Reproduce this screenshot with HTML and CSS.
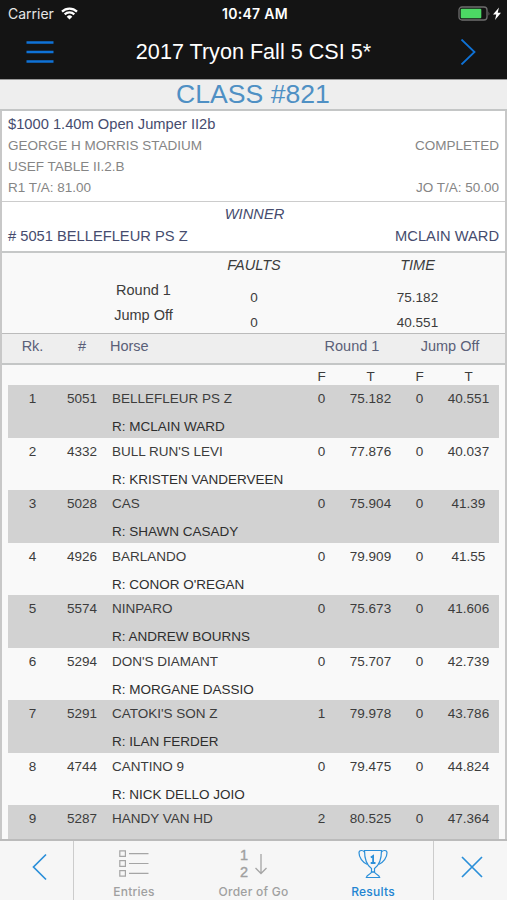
FILE: index.html
```
<!DOCTYPE html>
<html lang="en">
<head>
    <meta charset="UTF-8">
    <meta name="viewport" content="width=device-width, initial-scale=1.0">
    <title>2017 Tryon Fall 5 CSI 5* | Results</title>
    <link rel="stylesheet" href="styles.css">
</head>
<body>

<!-- Status bar -->
<div class="status">
    <div class="carrier">
        <span>Carrier</span>
        <svg width="17" height="13" viewBox="0 0 17 13" fill="none" stroke="#fff" stroke-width="2.2">
            <path d="M1 4.6a10.7 10.7 0 0 1 15 0M3.7 7.4a6.8 6.8 0 0 1 9.6 0"/>
            <path d="M8.5 12.6L5.7 9.7a4 4 0 0 1 5.6 0z" fill="#fff" stroke="none"/>
        </svg>
    </div>
    <div class="clock">10:47 AM</div>
    <div class="battery">
        <svg width="44" height="16" viewBox="0 0 44 16">
            <rect x="1" y="1" width="28" height="13" rx="3" fill="none" stroke="#6d6d6d" stroke-width="1.3"/>
            <rect x="2.7" y="2.8" width="20.6" height="9.4" rx="1" fill="#4cd964"/>
            <path d="M30.5 5.2q1.8 2.3 0 4.600z" fill="#6d6d6d"/>
            <path d="M41 1.500l-6 7h3.300L37 14l6-7.200h-3.300z" fill="#fff"/>
        </svg>
    </div>
</div>

<!-- Navigation -->
<div class="navbar">
    <svg class="menu" width="28" height="24" viewBox="0 0 28 24" stroke="#0f72d6" stroke-width="2.4">
        <path d="M.5 2.500h27M.5 12h27M.5 21.500h27"/>
    </svg>
    <h1>2017 Tryon Fall 5 CSI 5*</h1>
    <svg class="next" width="16" height="26" viewBox="0 0 16 26" fill="none" stroke="#0f72d6" stroke-width="1.8">
        <path d="M1.500 .5L14.500 13 1.500 25.500"/>
    </svg>
</div>

<h2 class="class-title">CLASS #821</h2>

<div class="content">
    <div class="info">
        <div class="info-name">$1000 1.40m Open Jumper II2b</div>
        <div class="info-line"><span>GEORGE H MORRIS STADIUM</span><span>COMPLETED</span></div>
        <div class="info-line"><span>USEF TABLE II.2.B</span></div>
        <div class="info-line"><span>R1 T/A: 81.00</span><span>JO T/A: 50.00</span></div>
    </div>

    <div class="winner">
        <div class="winner-label">WINNER</div>
        <div class="winner-line"><span># 5051 BELLEFLEUR PS Z</span><span>MCLAIN WARD</span></div>
    </div>

    <div class="summary">
        <span></span><em>FAULTS</em><em>TIME</em>
        <span class="label">Round 1</span><span>0</span><span>75.182</span>
        <span class="label">Jump Off</span><span>0</span><span>40.551</span>
    </div>

    <div class="head">
        <span>Rk.</span><span>#</span><span class="horse">Horse</span>
        <span class="round">Round 1</span><span class="round">Jump Off</span>
    </div>

    <!-- Results list -->
    <div class="results">
        <div class="row sub">
            <span></span><span></span><span></span><span>F</span><span>T</span><span>F</span><span>T</span>
        </div>
        <div class="row odd">
            <span>1</span><span>5051</span><span class="horse">BELLEFLEUR PS Z</span><span>0</span><span>75.182</span><span>0</span><span>40.551</span>
            <span class="rider">R: MCLAIN WARD</span>
        </div>
        <div class="row">
            <span>2</span><span>4332</span><span class="horse">BULL RUN'S LEVI</span><span>0</span><span>77.876</span><span>0</span><span>40.037</span>
            <span class="rider">R: KRISTEN VANDERVEEN</span>
        </div>
        <div class="row odd">
            <span>3</span><span>5028</span><span class="horse">CAS</span><span>0</span><span>75.904</span><span>0</span><span>41.39</span>
            <span class="rider">R: SHAWN CASADY</span>
        </div>
        <div class="row">
            <span>4</span><span>4926</span><span class="horse">BARLANDO</span><span>0</span><span>79.909</span><span>0</span><span>41.55</span>
            <span class="rider">R: CONOR O'REGAN</span>
        </div>
        <div class="row odd">
            <span>5</span><span>5574</span><span class="horse">NINPARO</span><span>0</span><span>75.673</span><span>0</span><span>41.606</span>
            <span class="rider">R: ANDREW BOURNS</span>
        </div>
        <div class="row">
            <span>6</span><span>5294</span><span class="horse">DON'S DIAMANT</span><span>0</span><span>75.707</span><span>0</span><span>42.739</span>
            <span class="rider">R: MORGANE DASSIO</span>
        </div>
        <div class="row odd">
            <span>7</span><span>5291</span><span class="horse">CATOKI'S SON Z</span><span>1</span><span>79.978</span><span>0</span><span>43.786</span>
            <span class="rider">R: ILAN FERDER</span>
        </div>
        <div class="row">
            <span>8</span><span>4744</span><span class="horse">CANTINO 9</span><span>0</span><span>79.475</span><span>0</span><span>44.824</span>
            <span class="rider">R: NICK DELLO JOIO</span>
        </div>
        <div class="row odd">
            <span>9</span><span>5287</span><span class="horse">HANDY VAN HD</span><span>2</span><span>80.525</span><span>0</span><span>47.364</span>
        </div>
    </div>
</div>

<!-- Bottom tabs -->
<div class="tabbar">
    <div class="side back">
        <svg width="16" height="28" viewBox="0 0 16 28" fill="none" stroke="#2b8fd9" stroke-width="1.7">
            <path d="M14 1.500L1.500 14 14 26.500"/>
        </svg>
    </div>
    <div class="tabs">
        <div class="tab">
            <svg width="30" height="30" viewBox="0 0 30 30" fill="none" stroke="#a5a5a5" stroke-width="1.2">
                <path d="M.8 1.800h5.600v5.600H.8zM.8 11.700h5.600v5.600H.8zM.8 21.600h5.600v5.600H.8zM10 4.600h19.500M10 14.500h19.500M10 24.400h19.500"/>
            </svg>
            <span>Entries</span>
        </div>
        <div class="tab">
            <div class="order">
                <div class="digits"><span>1</span><span>2</span></div>
                <svg width="12" height="22" viewBox="0 0 12 22" fill="none" stroke="#a5a5a5" stroke-width="1.3">
                    <path d="M6 1v19.500M.5 15L6 20.500l5.500-5.500"/>
                </svg>
            </div>
            <span class="name">Order of Go</span>
        </div>
        <div class="tab active">
            <svg width="30" height="30" viewBox="0 0 30 30" fill="none" stroke="#2b8fd9" stroke-width="1.2">
                <path d="M6.500 1.500h17c0 9-2 14.500-7 18v3.500h-3v-3.500c-5-3.500-7-9-7-18z"/>
                <path d="M6.600 3.200C5 .9 1 .8 1 3.800c0 4.700 3.500 9.800 8.400 11.700M23.400 3.200C25 .9 29 .8 29 3.800c0 4.700-3.500 9.800-8.400 11.700"/>
                <path d="M13.500 23c0 2.200-4.700 2.300-5.200 5.500h13.400c-.5-3.200-5.200-3.300-5.200-5.500z"/>
                <path d="M12.800 8.400l2.300-1.500v7M12.700 14h4.800" stroke-width="1.8"/>
            </svg>
            <span>Results</span>
        </div>
    </div>
    <div class="side close">
        <svg width="22" height="22" viewBox="0 0 22 22" stroke="#2b8fd9" stroke-width="1.7">
            <path d="M1 1l20 20M21 1L1 21"/>
        </svg>
    </div>
</div>

</body>
</html>
```
FILE: styles.css
```
* {
    box-sizing: border-box;
}

body {
    margin: 0;
    height: 900px;
    display: flex;
    flex-direction: column;
    overflow: hidden;
    background: #f9f9f9;
    color: #3c3c3c;
    font-family: "Liberation Sans", Arial, sans-serif;
    font-size: 13.5px;
}

svg {
    display: block;
}

/* status bar + navigation */
.status {
    height: 27px;
    flex: none;
    display: grid;
    grid-template-columns: 1fr auto 1fr;
    align-items: center;
    padding: 0 5px 0 8px;
    background: #141414;
    color: #fff;
    font-family: Inter, sans-serif;
}

.carrier {
    display: flex;
    align-items: center;
    gap: 7px;
    color: #e6e6e6;
    font-size: 14px;
}

.clock {
    font-size: 14px;
    font-weight: 600;
    letter-spacing: 0.3px;
}

.battery {
    justify-self: end;
}

.navbar {
    height: 52px;
    flex: none;
    display: flex;
    justify-content: space-between;
    align-items: center;
    padding: 0 31px 2px 26px;
    background: #141414;
}

.navbar h1 {
    margin: 0 7px 0 0;
    color: #fff;
    font-size: 21.6px;
    font-weight: normal;
    white-space: nowrap;
}

.class-title {
    height: 32px;
    flex: none;
    margin: 0;
    padding-right: 1px;
    border-top: 1px solid #999;
    border-bottom: 2px solid #c4c6c6;
    background: #eee;
    color: #4f90c4;
    font-size: 26.6px;
    font-weight: normal;
    line-height: 29px;
    text-align: center;
}

.content {
    flex: 1;
    min-height: 0;
    overflow: hidden;
    border: solid #c8c8c8;
    border-width: 0 2px;
}

/* class info */
.info {
    height: 91px;
    padding: 3px 6px 0;
    border-bottom: 1px solid #ccc;
    background: #fff;
    line-height: 21px;
}

.info-name {
    color: #464c6e;
    font-size: 14.7px;
}

.info-line,
.winner-line {
    display: flex;
    justify-content: space-between;
}

.info-line {
    color: #858585;
    font-size: 13.5px;
}

.winner {
    height: 51px;
    padding: 2px 6px 0;
    border-bottom: 2px solid #c6c8c8;
    background: #fff;
    color: #464c6e;
    font-size: 14.7px;
    line-height: 22px;
}

.winner-label {
    padding-left: 2px;
    font-style: italic;
    line-height: 21px;
    text-align: center;
}

.summary {
    height: 81px;
    display: grid;
    grid-template-columns: 110px 112px 1fr;
    grid-template-rows: 32px 25px 24px;
    padding-left: 86px;
    border-bottom: 1px solid #bbb;
    line-height: 25px;
    text-align: center;
}

.summary em {
    font-size: 14.5px;
}

.summary > :nth-child(3n) {
    padding-left: 20px;
}

.summary .label {
    margin-top: -7px;
    padding-left: 1px;
    font-size: 14.5px;
}

/* results table */
.head {
    height: 31px;
    display: grid;
    grid-template-columns: 49px 50px 1fr 98px 98px;
    padding: 0 6px;
    border-bottom: 2px solid #c4c6c6;
    background: #eee;
    color: #5a6078;
    font-size: 14.5px;
    line-height: 25px;
    text-align: center;
}

.head .horse {
    padding-left: 3px;
    text-align: left;
}

.results {
    padding: 0 6px;
}

.row {
    height: 52.55px;
    display: grid;
    grid-template-columns: 49px 50px 1fr 49px 49px 49px 49px;
    grid-template-rows: 27px 25px;
    padding-right: 6px;
    line-height: 27px;
    text-align: center;
}

.row.odd {
    background: #d2d2d2;
}

.row.sub {
    height: 20px;
    line-height: 23px;
}

.row .horse,
.row .rider {
    padding-left: 5px;
    text-align: left;
}

.row .rider {
    grid-column: 3 / -1;
    line-height: 29px;
    color: #2e2e2e;
}

/* bottom tabs */
.tabbar {
    height: 61px;
    flex: none;
    display: flex;
    border-top: 2px solid #bbb;
    background: #f6f6f6;
    color: #a0a0a0;
    font-family: Inter, sans-serif;
    font-size: 12px;
    font-weight: 500;
}

.side {
    width: 75px;
    display: flex;
    justify-content: center;
    padding: 12px 0 0 7px;
    border-right: 1px solid #ccc;
}

.close {
    padding: 15px 0 0 3px;
    border-right: none;
    border-left: 1px solid #ccc;
}

.tabs {
    flex: 1;
    display: flex;
    justify-content: center;
}

.tab {
    width: 119.5px;
    display: flex;
    flex-direction: column;
    align-items: center;
    padding-top: 8px;
}

.tab > span {
    margin-top: 5px;
    letter-spacing: 0.25px;
    line-height: 15px;
}

.tab.active {
    color: #2385d2;
}

.order {
    height: 30px;
    display: flex;
    align-items: center;
    gap: 7px;
}

.digits {
    display: flex;
    flex-direction: column;
    font-family: "Liberation Sans", Arial, sans-serif;
    font-size: 14.5px;
    line-height: 17px;
    -webkit-text-stroke: 0.4px #a0a0a0;
}
```
